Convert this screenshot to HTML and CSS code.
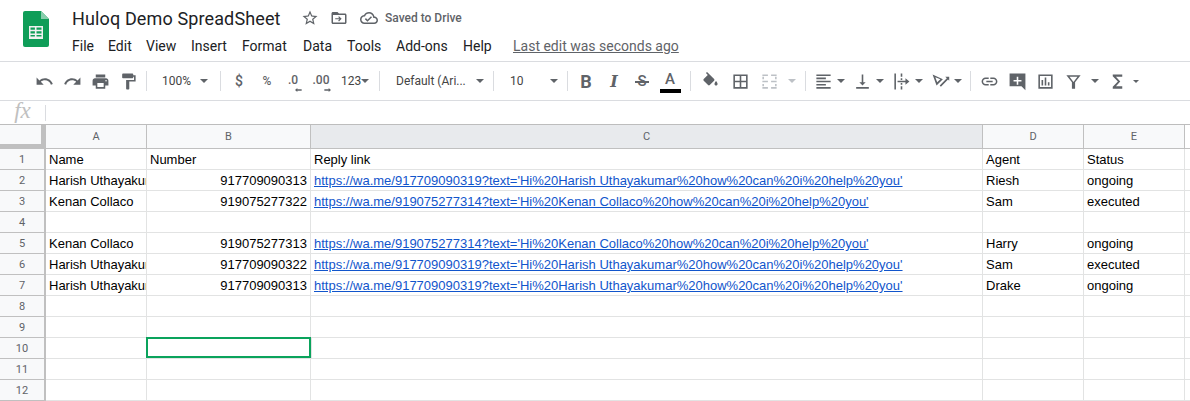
FILE: index.html
```html
<!DOCTYPE html>
<html>
<head>
<meta charset="UTF-8">
<title>Huloq Demo SpreadSheet</title>
<link rel="stylesheet" href="styles.css">
</head>
<body>
<div class="top">
  <svg class="logo" viewBox="0 0 26 36"><path fill="#0f9d58" d="M2 0h16l8 8v26a2 2 0 0 1-2 2H2a2 2 0 0 1-2-2V2a2 2 0 0 1 2-2z"/><path fill="#87ceac" d="M18 0l8 8h-8z"/><path fill="#f1f1f1" d="M6 15h14v13H6zm1.5 1.5v2.2h4.4v-2.2zm6 0v2.2h5v-2.2zm-6 3.8v2.2h4.4v-2.2zm6 0v2.2h5v-2.2zm-6 3.8v1.4h4.4v-1.4zm6 0v1.4h5v-1.4z" fill-rule="evenodd"/></svg>
  <div class="head">
    <div class="title-row">
      <span class="title">Huloq Demo SpreadSheet</span>
      <svg class="ti star" viewBox="0 0 24 24"><path d="M22 9.24l-7.19-.62L12 2 9.19 8.63 2 9.24l5.46 4.73L5.82 21 12 17.27 18.18 21l-1.63-7.03L22 9.24zM12 15.4l-3.76 2.27 1-4.28-3.32-2.88 4.38-.38L12 6.1l1.71 4.04 4.38.38-3.32 2.88 1 4.28L12 15.4z"/></svg>
      <svg class="ti move" viewBox="0 0 24 24"><path d="M20 6h-8l-2-2H4c-1.1 0-2 .9-2 2v12c0 1.1.9 2 2 2h16c1.1 0 2-.9 2-2V8c0-1.1-.9-2-2-2zm0 12H4V8h16v10zM12 9.5l-1.1 1.1 1.6 1.6H7v1.6h5.5l-1.6 1.6 1.1 1.1 3.5-3.5z"/></svg>
      <svg class="ti cloud" viewBox="0 0 24 24"><path d="M19.35 10.04C18.67 6.59 15.64 4 12 4 9.11 4 6.6 5.64 5.35 8.04 2.34 8.36 0 10.91 0 14c0 3.31 2.69 6 6 6h13c2.76 0 5-2.24 5-5 0-2.64-2.05-4.78-4.65-4.96zM19 18H6c-2.21 0-4-1.79-4-4 0-2.05 1.53-3.76 3.56-3.97l1.07-.11.5-.95C8.08 7.14 9.94 6 12 6c2.62 0 4.88 1.86 5.39 4.43l.3 1.5 1.53.11c1.56.1 2.78 1.41 2.78 2.96 0 1.65-1.35 3-3 3zm-9-3.82l-2.09-2.09L6.5 13.5 10 17l6.01-6.01-1.41-1.41z"/></svg>
      <span class="saved">Saved to Drive</span>
    </div>
    <div class="menu">
      <span class="m-file">File</span><span class="m-edit">Edit</span><span class="m-view">View</span><span class="m-insert">Insert</span><span class="m-format">Format</span><span class="m-data">Data</span><span class="m-tools">Tools</span><span class="m-addons">Add-ons</span><span class="m-help">Help</span>
      <span class="last-edit">Last edit was seconds ago</span>
    </div>
  </div>
</div>

<div class="toolbar">
  <span class="btn"><svg viewBox="0 0 24 24"><path d="M12.5 8c-2.65 0-5.05.99-6.9 2.6L2 7v9h9l-3.62-3.62c1.39-1.16 3.16-1.88 5.12-1.88 3.54 0 6.55 2.31 7.6 5.5l2.37-.78C21.08 11.03 17.15 8 12.5 8z"/></svg></span>
  <span class="btn"><svg viewBox="0 0 24 24"><path d="M18.4 10.6C16.55 8.99 14.15 8 11.5 8c-4.65 0-8.58 3.03-9.96 7.22L3.9 16c1.05-3.19 4.05-5.5 7.6-5.5 1.95 0 3.73.72 5.12 1.88L13 16h9V7l-3.6 3.6z"/></svg></span>
  <span class="btn"><svg viewBox="0 0 24 24"><path d="M19 8H5c-1.66 0-3 1.34-3 3v6h4v4h12v-4h4v-6c0-1.66-1.34-3-3-3zm-3 11H8v-5h8v5zm3-7c-.55 0-1-.45-1-1s.45-1 1-1 1 .45 1 1-.45 1-1 1zm-1-9H6v4h12V3z"/></svg></span>
  <span class="btn"><svg viewBox="0 0 24 24"><path d="M18 4V3c0-.55-.45-1-1-1H5c-.55 0-1 .45-1 1v4c0 .55.45 1 1 1h12c.55 0 1-.45 1-1V6h1v4H9v11c0 .55.45 1 1 1h2c.55 0 1-.45 1-1v-9h8V4h-3z"/></svg></span>
  <i class="sep"></i>
  <span class="drop zoom-drop"><span>100%</span><b class="arrow"></b></span>
  <i class="sep"></i>
  <span class="btn txt">$</span>
  <span class="btn txt pct">%</span>
  <span class="btn dec"><span>.0</span><svg viewBox="0 0 12 6"><path d="M0 3l3.5-3v2H10v2H3.500v2z"/></svg></span>
  <span class="btn dec"><span>.00</span><svg viewBox="0 0 12 6"><path d="M12 3L8.500 0v2H2v2h6.500v2z"/></svg></span>
  <span class="drop more"><span>123</span><b class="arrow"></b></span>
  <i class="sep"></i>
  <span class="drop font-drop"><span>Default (Ari...</span><b class="arrow"></b></span>
  <i class="sep"></i>
  <span class="drop size-drop"><span>10</span><b class="arrow"></b></span>
  <i class="sep"></i>
  <span class="btn glyph bold">B</span>
  <span class="btn glyph ital">I</span>
  <span class="btn glyph strike">S</span>
  <span class="btn color"><span>A</span><i class="swatch"></i></span>
  <i class="sep sep-color"></i>
  <span class="btn"><svg viewBox="0 0 24 24"><path d="M16.56 8.94L7.62 0 6.21 1.41l2.38 2.380-5.150 5.150c-.59.59-.59 1.540 0 2.120l5.500 5.500c.29.29.68.44 1.060.44s.77-.15 1.060-.44l5.500-5.500c.59-.58.59-1.530 0-2.120zM19 11.500s-2 2.170-2 3.500c0 1.100.9 2 2 2s2-.9 2-2c0-1.330-2-3.500-2-3.500z"/></svg></span>
  <span class="btn borders"><svg viewBox="0 0 24 24"><path d="M3 3v18h18V3H3zm8 16H5v-6h6v6zm0-8H5V5h6v6zm8 8h-6v-6h6v6zm0-8h-6V5h6v6z"/></svg></span>
  <span class="btn off"><svg viewBox="0 0 24 24"><path d="M3 3h7v2H3zm11 0h7v2h-7zM3 19h7v2H3zm11 0h7v2h-7zM3 6h2v3H3zm16 0h2v3h-2zM3 15h2v3H3zm16 0h2v3h-2zM3 11h7v2H3zm11 0h7v2h-7z"/></svg></span>
  <b class="arrow arrow-off"></b>
  <i class="sep"></i>
  <span class="btn pair"><svg viewBox="0 0 24 24"><path d="M15 15H3v2h12v-2zm0-8H3v2h12V7zM3 13h18v-2H3v2zm0 8h18v-2H3v2zM3 3v2h18V3H3z"/></svg><b class="arrow"></b></span>
  <span class="btn pair"><svg viewBox="0 0 24 24"><path d="M16 13h-3V3h-2v10H8l4 4 4-4zM4 19v2h16v-2H4z"/></svg><b class="arrow"></b></span>
  <span class="btn pair"><svg viewBox="0 0 24 24"><path d="M3 2h2v20H3zm8 0h2v4h-2zm0 6h2v2h-2zm0 6h2v2h-2zm0 4h2v4h-2zM7 11h10V8l5 4-5 4v-3H7z"/></svg><b class="arrow"></b></span>
  <span class="btn pair"><svg viewBox="0 0 24 24"><path d="M2 3l13 6-8 8zm3.500 3.500l2.300 6.500 4-4zM11 17l9-9-2-2h5v5l-1.500-1.500-9 9z"/></svg><b class="arrow"></b></span>
  <i class="sep"></i>
  <span class="btn"><svg viewBox="0 0 24 24"><path d="M3.900 12c0-1.710 1.390-3.100 3.100-3.100h4V7H7c-2.760 0-5 2.240-5 5s2.240 5 5 5h4v-1.900H7c-1.710 0-3.100-1.390-3.100-3.100zM8 13h8v-2H8v2zm9-6h-4v1.900h4c1.710 0 3.100 1.390 3.100 3.100s-1.390 3.100-3.100 3.100h-4V17h4c2.760 0 5-2.240 5-5s-2.240-5-5-5z"/></svg></span>
  <span class="btn"><svg viewBox="0 0 24 24"><path fill-rule="evenodd" d="M2 2h20v21l-5-5H2zm9 4v4H7v2h4v4h2v-4h4v-2h-4V6z"/></svg></span>
  <span class="btn"><svg viewBox="0 0 24 24"><path d="M9 17H7v-7h2v7zm4 0h-2V7h2v10zm4 0h-2v-4h2v4zm2 2H5V5h14v14zm2-16H3v18h18V3z"/></svg></span>
  <span class="btn pair filter"><svg viewBox="0 0 24 24"><path fill-rule="evenodd" d="M3 4h18l-7 9v8h-4v-8zm4 2l5 6.500L17 6z"/></svg><b class="arrow"></b></span>
  <span class="btn pair sum"><svg viewBox="0 0 24 24"><path d="M18 3H6v2.500L12.500 12 6 18.500V21h12v-3h-8l5.500-6L10 6h8z"/></svg><b class="arrow small"></b></span>
</div>

<div class="formula">
  <span class="fx">fx</span>
  <i class="fx-sep"></i>
</div>

<div class="sheet">
  <div class="corner"></div><div class="col">A</div><div class="col">B</div><div class="col col-on">C</div><div class="col">D</div><div class="col">E</div><div class="col-rest"></div>

  <div class="row-no">1</div><div class="cell">Name</div><div class="cell">Number</div><div class="cell">Reply link</div><div class="cell">Agent</div><div class="cell">Status</div><div class="rest"></div>

  <div class="row-no">2</div><div class="cell">Harish Uthayakumar</div><div class="cell num">917709090313</div><div class="cell"><a href="#">https://wa.me/917709090319?text='Hi%20Harish Uthayakumar%20how%20can%20i%20help%20you'</a></div><div class="cell">Riesh</div><div class="cell">ongoing</div><div class="rest"></div>

  <div class="row-no">3</div><div class="cell">Kenan Collaco</div><div class="cell num">919075277322</div><div class="cell"><a href="#">https://wa.me/919075277314?text='Hi%20Kenan Collaco%20how%20can%20i%20help%20you'</a></div><div class="cell">Sam</div><div class="cell">executed</div><div class="rest"></div>

  <div class="row-no">4</div><div class="cell"></div><div class="cell"></div><div class="cell"></div><div class="cell"></div><div class="cell"></div><div class="rest"></div>

  <div class="row-no">5</div><div class="cell">Kenan Collaco</div><div class="cell num">919075277313</div><div class="cell"><a href="#">https://wa.me/919075277314?text='Hi%20Kenan Collaco%20how%20can%20i%20help%20you'</a></div><div class="cell">Harry</div><div class="cell">ongoing</div><div class="rest"></div>

  <div class="row-no">6</div><div class="cell">Harish Uthayakumar</div><div class="cell num">917709090322</div><div class="cell"><a href="#">https://wa.me/917709090319?text='Hi%20Harish Uthayakumar%20how%20can%20i%20help%20you'</a></div><div class="cell">Sam</div><div class="cell">executed</div><div class="rest"></div>

  <div class="row-no">7</div><div class="cell">Harish Uthayakumar</div><div class="cell num">917709090313</div><div class="cell"><a href="#">https://wa.me/917709090319?text='Hi%20Harish Uthayakumar%20how%20can%20i%20help%20you'</a></div><div class="cell">Drake</div><div class="cell">ongoing</div><div class="rest"></div>

  <div class="row-no">8</div><div class="cell"></div><div class="cell"></div><div class="cell"></div><div class="cell"></div><div class="cell"></div><div class="rest"></div>
  <div class="row-no">9</div><div class="cell"></div><div class="cell"></div><div class="cell"></div><div class="cell"></div><div class="cell"></div><div class="rest"></div>
  <div class="row-no">10</div><div class="cell"></div><div class="cell selected"></div><div class="cell"></div><div class="cell"></div><div class="cell"></div><div class="rest"></div>
  <div class="row-no">11</div><div class="cell"></div><div class="cell"></div><div class="cell"></div><div class="cell"></div><div class="cell"></div><div class="rest"></div>
  <div class="row-no">12</div><div class="cell"></div><div class="cell"></div><div class="cell"></div><div class="cell"></div><div class="cell"></div><div class="rest"></div>
</div>
</body>
</html>
```

FILE: styles.css
```css
html, body { margin: 0; padding: 0; height: 401px; overflow: hidden; background: #fff; }
body { font-family: Roboto, "Liberation Sans", sans-serif; color: #3c4043; }

/* title + menu */
.top { display: flex; height: 62px; box-sizing: border-box; border-bottom: 1px solid #dadce0; padding: 11px 0 0 23px; }
.logo { width: 26px; height: 36px; margin-right: 23px; flex: none; }
.head { margin-top: -6px; }
.title-row { display: flex; align-items: center; height: 26px; }
.title { font-size: 18px; color: #202124; width: 209px; white-space: nowrap; letter-spacing: .13px; }
.ti { width: 18px; height: 18px; fill: #5f6368; flex: none; }
.star { margin-left: 20px; }
.move { margin-left: 11px; }
.cloud { margin-left: 12px; }
.saved { font-size: 12px; font-weight: 500; color: #5f6368; margin-left: 7px; white-space: nowrap; }
.menu { display: flex; font-size: 14px; color: #202124; height: 20px; line-height: 20px; margin-top: 5px; white-space: nowrap; }
.menu span { flex: none; }
.m-file { width: 36px; }
.m-edit { width: 38px; }
.m-view { width: 45px; }
.m-insert { width: 51px; }
.m-format { width: 61px; }
.m-data { width: 44px; }
.m-tools { width: 49px; }
.m-addons { width: 67px; }
.m-help { width: 50px; }
.menu .last-edit { color: #5f6368; text-decoration: underline; }

/* toolbar */
.toolbar { display: flex; align-items: center; height: 39px; box-sizing: border-box; border-bottom: 1px solid #dadce0; padding-left: 30px; color: #5f6368; font-size: 12px; }
.btn { width: 28px; height: 28px; display: flex; align-items: center; justify-content: center; flex: none; }
.btn svg { width: 19px; height: 19px; fill: #5f6368; }
.sep { width: 1px; height: 20px; background: #dadce0; margin: 0 4px; flex: none; }
.arrow { display: block; width: 0; height: 0; border: 4px solid transparent; border-top-color: #5f6368; border-bottom: 0; flex: none; }
.arrow.small { border-width: 3px; border-bottom: 0; }
.drop { display: flex; align-items: center; justify-content: space-between; height: 28px; flex: none; box-sizing: border-box; color: #444; }
.zoom-drop { width: 65px; padding: 0 8px 0 11px; }
.more { width: 38px; padding: 0 6px 0 4px; }
.font-drop { width: 105px; padding: 0 5px 0 12px; }
.size-drop { width: 65px; padding: 0 5px 0 12px; }
.txt { font-size: 14px; font-weight: 500; }
.pct { font-size: 12px; }
.dec { position: relative; font-size: 12px; font-weight: 500; }
.dec span { margin: -2px 0 0 -4px; }
.btn.dec svg { position: absolute; width: 8px; height: 4px; left: 14px; bottom: 3px; }
.glyph { font-size: 18px; color: #5f6368; }
.bold { font-weight: 700; }
.ital { font-style: italic; font-weight: 700; font-size: 16px; font-family: "DejaVu Serif", serif; }
.strike { position: relative; font-size: 15px; font-weight: 500; }
.strike::after { content: ""; position: absolute; left: 7px; right: 7px; top: 14px; height: 2px; background: #5f6368; }
.color { flex-direction: column; justify-content: flex-start; }
.color span { font-size: 15px; font-weight: 500; line-height: 18px; margin-top: 3px; }
.swatch { display: block; width: 21px; height: 4px; background: #000; margin-top: 1px; }
.sep-color { margin: 0 5px 0 6px; }
.borders { margin: 0 1px 0 2px; }
.off svg { fill: #bdc1c6; }
.arrow-off { border-top-color: #bdc1c6; margin: 0 5px; }
.pair { width: 39px; justify-content: flex-start; padding-left: 4px; box-sizing: border-box; }
.pair svg { margin-right: 4px; }
.filter { width: 48px; padding-left: 5px; }
.filter svg { margin-right: 8px; }
.sum { padding-left: 1px; }
.sum svg { margin-right: 6px; }

/* formula bar */
.formula { display: flex; align-items: center; height: 24px; box-sizing: border-box; border-bottom: 1px solid #bdbdbd; }
.fx { font-family: "Liberation Serif", serif; font-style: italic; font-size: 23px; color: #c0c0c0; width: 45px; text-align: center; margin-top: -3px; }
.fx-sep { width: 1px; height: 16px; background: #dadce0; }

/* grid */
.sheet { display: grid; grid-template-columns: 46px 101px 164px 672px 101px 101px 5px; grid-template-rows: 24px; grid-auto-rows: 21px; font-family: "Liberation Sans", Arial, sans-serif; font-size: 13px; color: #000; }
.sheet > div { box-sizing: border-box; }
.corner { background: #f8f9fa; border-right: 5px solid #c0c0c0; border-bottom: 5px solid #c0c0c0; }
.col, .col-rest { background: #f8f9fa; border-right: 1px solid #c0c0c0; border-bottom: 1px solid #c0c0c0; font: 11px Roboto, sans-serif; color: #5f6368; text-align: center; line-height: 24px; }
.col-rest { border-right: 0; background: #fff; }
.col-on { background: #e8eaed; }
.row-no { background: #f8f9fa; border-right: 2px solid #c0c0c0; border-bottom: 1px solid #c0c0c0; font: 11px Roboto, sans-serif; color: #5f6368; text-align: center; line-height: 22px; }
.cell { border-right: 1px solid #e2e3e3; border-bottom: 1px solid #e2e3e3; padding: 0 3px; line-height: 22px; white-space: nowrap; overflow: hidden; }
.rest { border-bottom: 1px solid #e2e3e3; }
.num { text-align: right; }
.cell a { color: #1155cc; text-decoration: underline; }
.selected { box-shadow: inset 0 0 0 2px #0aa35c; margin: -1px 0 0 -1px; width: calc(100% + 2px); height: 22px; position: relative; }
```
